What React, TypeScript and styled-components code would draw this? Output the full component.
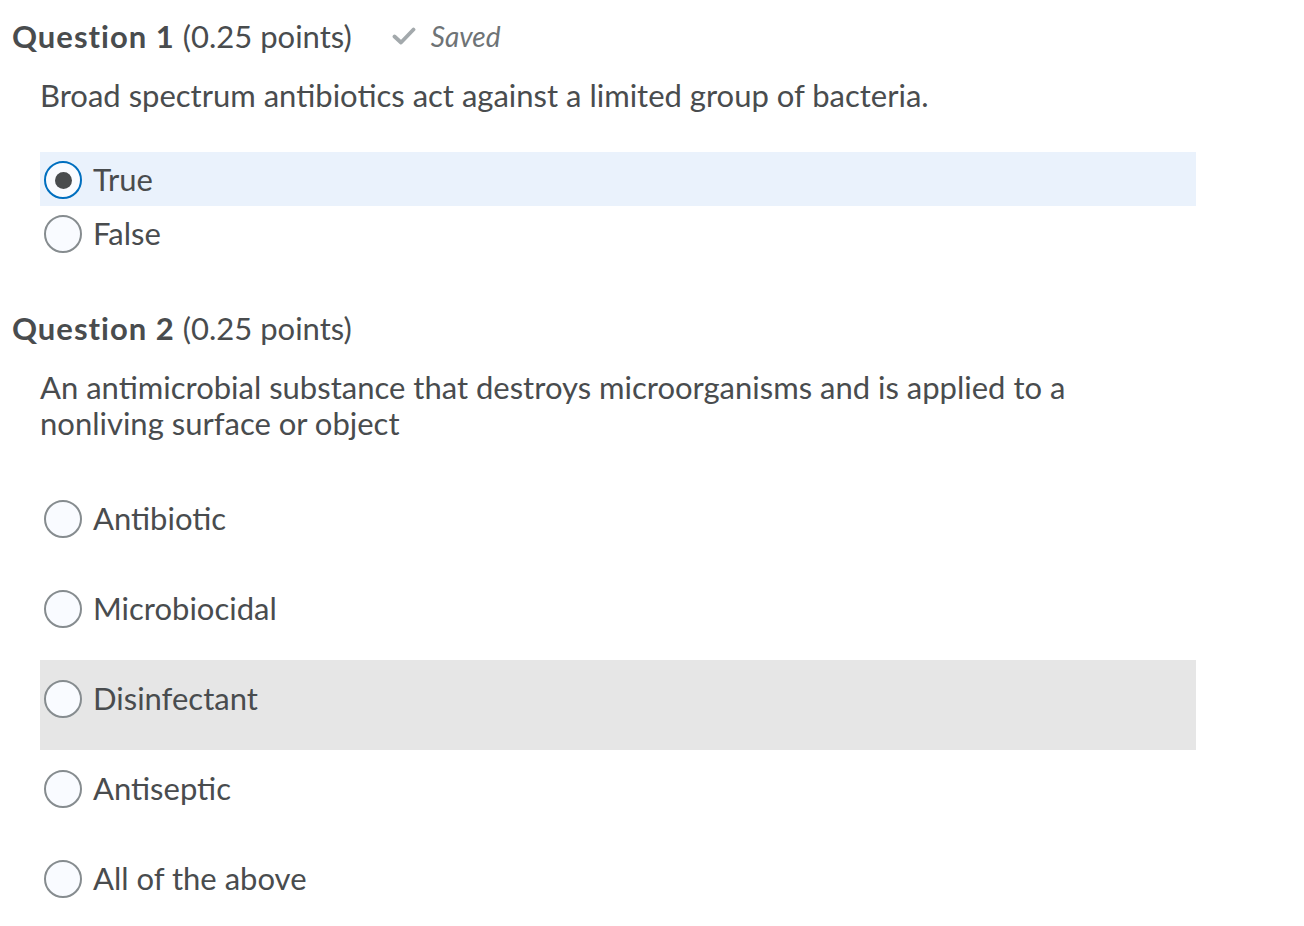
import React from 'react'
import styled, { createGlobalStyle } from 'styled-components'

const GlobalStyle = createGlobalStyle`
  html, body {
    margin: 0;
    padding: 0;
    background: #ffffff;
  }
  body {
    font-family: Lato, "Open Sans", "Liberation Sans", sans-serif;
    color: #494c4e;
  }
`

const Page = styled.div`
  padding: 18px 0 0 12px;
`

const Question = styled.section<{ gapTop?: number }>`
  margin-top: ${props => props.gapTop || 0}px;
`

const Header = styled.div`
  display: flex;
  align-items: center;
  height: 36px;
  font-size: 31px;
  line-height: 36px;
`

const Title = styled.strong`
  font-weight: 700;
  letter-spacing: 1px;
  margin-right: 8px;
`

const Points = styled.span`
  font-weight: 400;
`

const SavedTag = styled.span`
  display: inline-flex;
  align-items: center;
  margin-left: 40px;
  gap: 15px;
  font-size: 28px;
  font-style: italic;
  color: #6e7376;
`

const Body = styled.div`
  padding-left: 28px;
  width: 1156px;
`

const Prompt = styled.p`
  margin: 23px 0 39px;
  font-size: 31px;
  line-height: 36px;
`

const Options = styled.div`
  display: flex;
  flex-direction: column;
`

const Row = styled.label<{ tall?: boolean; tone?: 'selected' | 'hover' }>`
  display: flex;
  align-items: flex-start;
  gap: 11px;
  box-sizing: border-box;
  height: ${props => (props.tall ? 90 : 54)}px;
  padding: ${props => (props.tall ? 20 : 9)}px 0 0 4px;
  background: ${props =>
    props.tone === 'selected' ? '#eaf2fc' : props.tone === 'hover' ? '#e6e6e6' : 'transparent'};
  font-size: 31px;
  line-height: 36px;
  cursor: pointer;
`

const Radio = styled.span<{ checked?: boolean }>`
  flex: none;
  box-sizing: border-box;
  width: 38px;
  height: 38px;
  border-radius: 50%;
  border: 2px solid ${props => (props.checked ? '#006fbf' : '#868c8f')};
  background: #f9fbff;
  display: flex;
  align-items: center;
  justify-content: center;
  &::after {
    content: '';
    display: ${props => (props.checked ? 'block' : 'none')};
    width: 17px;
    height: 17px;
    border-radius: 50%;
    background: #494c4e;
  }
`

const Check = () => (
  <svg width="24" height="20" viewBox="0 0 24 20" fill="none">
    <path d="M2.5 10.5 L9 16.5 L21.5 3.5" stroke="#a3a9ac" strokeWidth="3.8" strokeLinecap="round" strokeLinejoin="round" />
  </svg>
)

interface OptionProps {
  label: string
  checked?: boolean
  tall?: boolean
  tone?: 'selected' | 'hover'
}

const Option: React.FC<OptionProps> = ({ label, checked, tall, tone }) => (
  <Row tall={tall} tone={tone}>
    <Radio checked={checked} />
    <span>{label}</span>
  </Row>
)

const App: React.FC = () => {
  return (
    <Page>
      <GlobalStyle />
      <Question>
        <Header>
          <Title>Question 1</Title>
          <Points>(0.25 points)</Points>
          <SavedTag>
            <Check />
            Saved
          </SavedTag>
        </Header>
        <Body>
          <Prompt>Broad spectrum antibiotics act against a limited group of bacteria.</Prompt>
          <Options>
            <Option label="True" checked tone="selected" />
            <Option label="False" />
          </Options>
        </Body>
      </Question>
      <Question gapTop={50}>
        <Header>
          <Title>Question 2</Title>
          <Points>(0.25 points)</Points>
        </Header>
        <Body>
          <Prompt>
            An antimicrobial substance that destroys microorganisms and is applied to a
            <br />
            nonliving surface or object
          </Prompt>
          <Options>
            <Option label="Antibiotic" tall />
            <Option label="Microbiocidal" tall />
            <Option label="Disinfectant" tall tone="hover" />
            <Option label="Antiseptic" tall />
            <Option label="All of the above" tall />
          </Options>
        </Body>
      </Question>
    </Page>
  )
}

export default App
